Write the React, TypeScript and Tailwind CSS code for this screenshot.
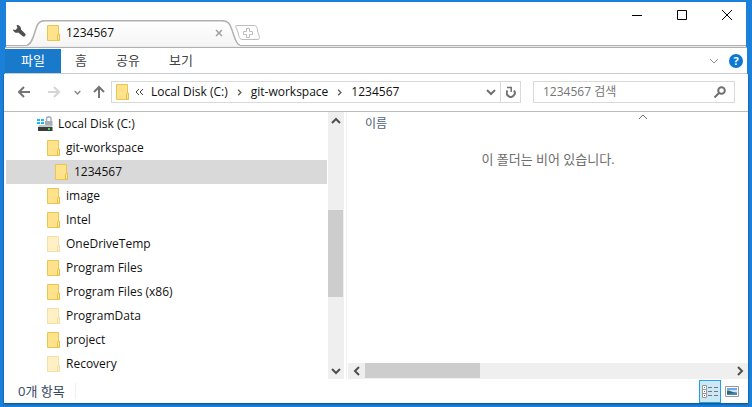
import { useState } from "react";

function Folder({ faded = false }: { faded?: boolean }) {
  return (
    <svg width="13" height="16" viewBox="0 0 13 16" className={faded ? "shrink-0 opacity-50" : "shrink-0"} aria-hidden="true">
      <path d="M.5.5h11v9h1v6H.5z" fill="#ffe38c" stroke="#eac54f" />
      <path d="M10.5 15v-5l1-1h1v6z" fill="#ffe99f" stroke="#e8c046" />
    </svg>
  );
}

function Drive() {
  return (
    <svg width="16" height="16" viewBox="0 0 16 16" className="shrink-0" aria-hidden="true">
      <path d="M0 3h3v2H0zM4 3h3v2H4zM0 6h3v2H0zM4 6h3v2H4z" fill="#18b9f2" />
      <path d="M9.500 6V3a2 2 0 0 1 4.500 0V5" fill="none" stroke="#a9b0b5" strokeWidth="1.500" />
      <path d="M8 5h7.500v5H8z" fill="#a3adb3" />
      <path d="M2 9h12l1 2H1z" fill="#c4c8ca" />
      <path d="M8 5h7v4H8z" fill="#a3adb3" />
      <path d="M1 11h14.500v4H1z" fill="#3c3c3c" />
      <path d="M11 12h2v2h-2z" fill="#35e05a" />
    </svg>
  );
}

function Chevron({ dir, size = 10, color = "#505050", weight = 2 }: { dir: "up" | "down" | "left" | "right"; size?: number; color?: string; weight?: number }) {
  const d = { up: "M1 7l4-4 4 4", down: "M1 3l4 4 4-4", left: "M7 1L3 5l4 4", right: "M3 1l4 4-4 4" }[dir];
  return (
    <svg width={size} height={size} viewBox="0 0 10 10" fill="none" stroke={color} strokeWidth={weight} aria-hidden="true">
      <path d={d} />
    </svg>
  );
}

const tree = [
  { name: "Local Disk (C:)", pad: "pl-[31px]", drive: true },
  { name: "git-workspace", pad: "pl-[41px]" },
  { name: "1234567", pad: "pl-[49px]" },
  { name: "image", pad: "pl-[41px]" },
  { name: "Intel", pad: "pl-[41px]" },
  { name: "OneDriveTemp", pad: "pl-[41px]", faded: true },
  { name: "Program Files", pad: "pl-[41px]" },
  { name: "Program Files (x86)", pad: "pl-[41px]" },
  { name: "ProgramData", pad: "pl-[41px]", faded: true },
  { name: "project", pad: "pl-[41px]" },
  { name: "Recovery", pad: "pl-[41px]", faded: true },
];

function TitleBar() {
  return (
    <header className="mx-[6px] flex h-[44px] items-end border-b border-[#b0b0b0] bg-white">
      <button aria-label="설정" className="mb-[6px] ml-[5px] flex h-4 w-4 items-center justify-center">
        <svg width="14" height="14" viewBox="0 0 14 14" aria-hidden="true">
          <path d="M4.500 1A4 4 0 0 1 9 5.500l4 4a1.600 1.600 0 0 1-2.500 2.500L6.200 8.500A4 4 0 0 1 .8 5.500l2.600.6 2-2z" fill="#505050" />
        </svg>
      </button>
      <div className="relative -mb-px flex h-[26px] w-[213px] items-center pl-[20px] pr-[17px]">
        <svg width="213" height="26" viewBox="0 0 213 26" className="absolute left-0 top-0" aria-hidden="true">
          <defs>
            <linearGradient id="tab" x1="0" y1="0" x2="0" y2="1">
              <stop offset="0" stopColor="#fff" />
              <stop offset="1" stopColor="#f5f5f5" />
            </linearGradient>
          </defs>
          <path d="M0 25C6 25 8 8 11 4c2-3 4-3.300 7-3.300h177c7 0 8 4.300 10 9.300s4 15 8 15v1H0z" fill="url(#tab)" />
          <path d="M0 25C6 25 8 8 11 4c2-3 4-3.300 7-3.300h177c7 0 8 4.300 10 9.300s4 15 8 15" fill="none" stroke="#b0b0b0" strokeWidth="1.500" />
        </svg>
        <span className="relative flex flex-1 items-center gap-[6px] text-[12px] leading-4">
          <Folder />
          1234567
        </span>
        <button aria-label="탭 닫기" className="relative flex h-4 w-2 items-center justify-center">
          <svg width="8" height="8" viewBox="0 0 8 8" stroke="#a0a0a0" strokeWidth="1.500" aria-hidden="true">
            <path d="M1 1l6 6M7 1L1 7" />
          </svg>
        </button>
      </div>
      <button aria-label="새 탭" className="mb-[3px] -ml-[6px]">
        <svg width="28" height="18" viewBox="0 0 28 18" fill="#fff" stroke="#bcbcbc" aria-hidden="true">
          <path d="M3 1.500h17c3 0 3 3 4 7s3 7-1 7H9c-4 0-4-3-5-7s-4-7-1-7z" />
          <path d="M12.500 4.500h3v3h3v3h-3v3h-3v-3h-3v-3h3z" />
        </svg>
      </button>
      <div className="ml-auto flex gap-[21px] self-start pr-[7px] pt-[1px] text-black">
        {[
          { label: "최소화", d: "M7 12.500h10" },
          { label: "최대화", d: "M7.500 7.500h9v9h-9z" },
          { label: "닫기", d: "M7 7l10 10M17 7L7 17" },
        ].map((b) => (
          <button key={b.label} aria-label={b.label}>
            <svg width="24" height="24" viewBox="0 0 24 24" fill="none" stroke="currentColor" aria-hidden="true">
              <path d={b.d} />
            </svg>
          </button>
        ))}
      </div>
    </header>
  );
}

function Ribbon() {
  return (
    <>
      <div className="mx-[6px] h-px bg-[#ececec]" />
      <nav className="mx-[5px] flex h-[27px] items-center border-b border-t border-b-[#d9d9d9] border-t-[#b0b0b0] bg-white pt-px text-[13px] text-[#444]">
        <button className="h-full w-14 bg-[#1979ca] text-white">파일</button>
        <button className="h-full w-10">홈</button>
        <button className="h-full w-[54px]">공유</button>
        <button className="h-full w-[52px]">보기</button>
        <div className="ml-auto flex items-center gap-[10px] pr-1">
          <button aria-label="리본 확장">
            <Chevron dir="down" size={10} color="#909090" weight={1} />
          </button>
          <button aria-label="도움말" className="h-[14px] w-[14px] rounded-full bg-[#0a78d4] text-[11px] font-bold leading-[14px] text-white">?</button>
        </div>
      </nav>
    </>
  );
}

function AddressBar() {
  const [query, setQuery] = useState("");
  return (
    <div className="flex h-[38px] items-center border-b border-[#bcbcbc] bg-white pl-[14px] pr-[13px] pb-px">
      <button aria-label="뒤로" className="mr-[18px]">
        <svg width="12" height="12" viewBox="0 0 12 12" fill="none" stroke="#757575" strokeWidth="2" aria-hidden="true"><path d="M12 6H1M6 1L1 6l5 5" /></svg>
      </button>
      <button aria-label="앞으로" className="mr-[14px]">
        <svg width="12" height="12" viewBox="0 0 12 12" fill="none" stroke="#d5d5d5" strokeWidth="2" aria-hidden="true"><path d="M0 6h11M6 1l5 5-5 5" /></svg>
      </button>
      <button aria-label="최근 위치" className="mr-[12px]"><Chevron dir="down" size={7} color="#858585" /></button>
      <button aria-label="위로" className="mr-[6px]">
        <svg width="12" height="14" viewBox="0 0 12 14" fill="none" stroke="#757575" strokeWidth="2" aria-hidden="true"><path d="M6 13V2M1 7l5-5 5 5" /></svg>
      </button>
      <div className="flex h-[22px] min-w-0 flex-1 items-center border border-[#d9d9d9] pl-1 text-[12px]">
        <Folder />
        <svg width="9" height="8" viewBox="0 0 9 8" fill="none" stroke="#404040" className="ml-[6px]" aria-hidden="true"><path d="M4 1L1 4l3 3M8 1L5 4l3 3" /></svg>
        <button className="ml-[7px] whitespace-nowrap">Local Disk (C:)</button>
        <span className="mx-2"><Chevron dir="right" size={7} color="#606060" /></span>
        <button className="whitespace-nowrap">git-workspace</button>
        <span className="mx-2"><Chevron dir="right" size={7} color="#606060" /></span>
        <button>1234567</button>
        <button aria-label="이전 위치" className="ml-auto mr-1"><Chevron dir="down" size={10} color="#707070" /></button>
        <button aria-label="새로 고침" className="flex h-full w-5 items-center justify-center border-l border-[#d9d9d9]">
          <svg width="10" height="12" viewBox="0 0 10 12" fill="none" stroke="#707070" aria-hidden="true"><path d="M1.500 4.500A4 4 0 1 0 8 4.500" strokeWidth="2" /><path d="M1 1.500h5M5.200 1v5" strokeWidth="1.500" /></svg>
        </button>
      </div>
      <label className="ml-3 flex h-[22px] w-[202px] items-center border border-[#d9d9d9] pl-[9px] pr-2">
        <input aria-label="1234567 검색" value={query} onChange={(e) => setQuery(e.target.value)} placeholder="1234567 검색" className="min-w-0 flex-1 text-[12px] outline-none placeholder:text-[#757575]" />
        <svg width="12" height="12" viewBox="0 0 12 12" fill="none" stroke="#707070" strokeWidth="2" aria-hidden="true"><circle cx="7.500" cy="4.500" r="3.300" /><path d="M5 7l-4.500 4.500" /></svg>
      </label>
    </div>
  );
}

function Tree() {
  const [selected, setSelected] = useState("1234567");
  return (
    <div className="flex w-[338px] shrink-0">
      <ul className="mr-px min-w-0 flex-1">
        {tree.map((n) => (
          <li key={n.name}>
            <button onClick={() => setSelected(n.name)} className={`flex h-6 w-full items-center text-[12px] ${n.pad} ${n.drive ? "gap-[5px]" : "gap-[6px]"} ${selected === n.name ? "bg-[#d9d9d9]" : ""}`}>
              {n.drive ? <Drive /> : <Folder faded={n.faded} />}
              {n.name}
            </button>
          </li>
        ))}
      </ul>
      <div className="flex w-4 flex-col bg-[#efefef]">
        <button aria-label="위로 스크롤" className="flex h-[17px] items-center justify-center"><Chevron dir="up" /></button>
        <div className="grow-[81] basis-0" />
        <div className="mr-px grow-[87] basis-0 bg-[#cdcdcd]" />
        <div className="grow-[65] basis-0" />
        <button aria-label="아래로 스크롤" className="flex h-[17px] items-center justify-center"><Chevron dir="down" /></button>
      </div>
    </div>
  );
}

function FileList() {
  return (
    <main className="ml-[2px] flex min-w-0 flex-1 flex-col border-l border-[#f0f0f0] pl-px">
      <div className="flex h-6 pl-[17px] text-[12px] text-[#4c607a]">
        <button className="flex flex-1 items-center">
          이름
          <span className="ml-auto mr-[100px] self-start"><Chevron dir="up" size={10} color="#707070" weight={1} /></span>
        </button>
      </div>
      <p className="mt-[14px] flex-1 text-center text-[13px] leading-[18px] text-[#6d6d6d]">이 폴더는 비어 있습니다.</p>
      <div className="flex h-4 bg-[#efefef]">
        <button aria-label="왼쪽으로 스크롤" className="flex w-[17px] items-center justify-center"><Chevron dir="left" /></button>
        <div className="mb-px w-[115px] bg-[#cdcdcd]" />
        <button aria-label="오른쪽으로 스크롤" className="ml-auto flex w-[17px] items-center justify-center"><Chevron dir="right" /></button>
      </div>
    </main>
  );
}

function StatusBar() {
  return (
    <footer className="flex h-6 items-center pl-[14px] text-[12px] text-[#33475f]">
      <span className="border-r border-[#f0f0f0] pr-[10px] text-[13px] leading-4">0개 항목</span>
      <button aria-label="자세히" className="ml-auto flex h-[23px] w-[22px] items-center justify-center border border-[#26a0da] bg-[#cbe8f6]">
        <svg width="16" height="13" viewBox="0 0 16 13" fill="#fff" stroke="#999" className="shrink-0" aria-hidden="true">
          <path d="M.5.500h4v4h-4zM.5 4.500h4v4h-4zM.5 8.500h4v4h-4z" />
          <path d="M6 2.500h4M12 2.500h4M6 6.500h4M12 6.500h4M6 10.500h4M12 10.500h4" stroke="#777" />
          <path d="M2 2h1v1H2z" fill="#3a8" stroke="none" /><path d="M2 6h1v1H2z" fill="#48c" stroke="none" /><path d="M2 10h1v1H2z" fill="#c33" stroke="none" />
        </svg>
      </button>
      <button aria-label="큰 아이콘" className="ml-1 mr-[9px]">
        <svg width="14" height="11" viewBox="0 0 14 11" aria-hidden="true">
          <path d="M.5.500h13v10H.5z" fill="#fff" stroke="#999" />
          <path d="M2 2h10v7H2z" fill="#6ca7f0" /><path d="M2 4h10v2H2z" fill="#cfe4f5" /><path d="M2 4.500c4 0 5 2 10 2.500v2H2z" fill="#2d6a6a" /><path d="M2 8c4-1 7-1 10-1v2H2z" fill="#4a83b5" />
        </svg>
      </button>
    </footer>
  );
}

export default function App() {
  return (
    <div className="flex min-h-screen flex-col bg-[#1a80d9] pb-1 pt-[2px] font-['Open_Sans','Noto_Sans_CJK_KR',sans-serif] text-[#111]">
      <TitleBar />
      <Ribbon />
      <div className="mx-1 flex flex-1 flex-col bg-white shadow-[0_1px_2px_#0d4a80]">
        <AddressBar />
        <div className="flex flex-1 pl-[2px]">
          <Tree />
          <FileList />
        </div>
        <StatusBar />
      </div>
    </div>
  );
}
